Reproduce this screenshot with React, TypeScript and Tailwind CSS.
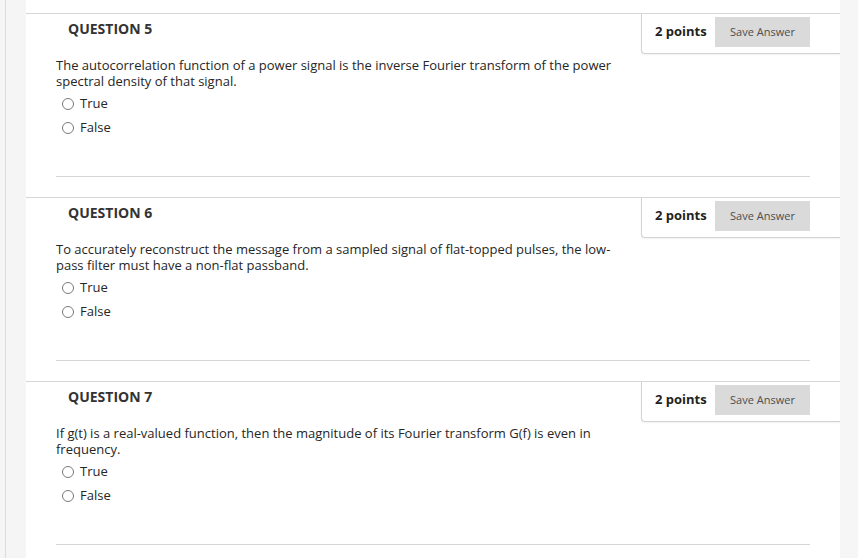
const questions = [
  {
    num: 5,
    text: "The autocorrelation function of a power signal is the inverse Fourier transform of the power spectral density of that signal.",
  },
  {
    num: 6,
    text: "To accurately reconstruct the message from a sampled signal of flat-topped pulses, the low-pass filter must have a non-flat passband.",
  },
  {
    num: 7,
    text: "If g(t) is a real-valued function, then the magnitude of its Fourier transform G(f) is even in frequency.",
  },
];

const Question = ({ num, text }: { num: number; text: string }) => {
  return (
    <section className="h-[184px] border-t border-[#d6d6d6]">
      <div className="flex h-[40px]">
        <h2 className="flex-1 pl-[42px] pt-[5px] text-[14px] leading-[20px] font-bold text-[#333]">
          QUESTION {num}
        </h2>
        <div className="w-[199px] h-[40px] border-l border-b border-[#d3d3d3] rounded-bl-[4px] shadow-[0_1px_2px_rgba(0,0,0,0.06)] pt-[3px]">
          <div className="flex items-center h-[30px] pl-[13px]">
            <span className="text-[13px] font-bold text-[#222]">2 points</span>
            <button className="ml-auto mr-[30px] w-[95px] h-[30px] bg-[#dadada] text-[11px] text-[#4d4d4d]">
              Save Answer
            </button>
          </div>
        </div>
      </div>

      <div className="px-[30px]">
        <p className="mt-[3px] w-[568px] text-[13px] leading-[16px] text-[#262626]">{text}</p>
        <div className="mt-[3px]">
          {["True", "False"].map((opt) => (
            <label key={opt} className="flex items-center h-[24px] text-[13px] text-[#262626]">
              <span className="ml-[6px] w-[12px] h-[12px] rounded-full border border-[#7a7a7a] bg-white" />
              <span className="ml-[6px]">{opt}</span>
            </label>
          ))}
        </div>
        <div className="mt-[36px] border-t border-[#d6d6d6]" />
      </div>
    </section>
  );
};

export default function App() {
  return (
    <div
      className="flex w-[858px] h-[558px] overflow-hidden bg-white"
      style={{ fontFamily: '"Open Sans", "Noto Sans", sans-serif' }}
    >
      <div className="w-[26px] shrink-0 bg-[#f5f5f5] pl-[5px]">
        <div className="h-full w-px bg-[#dcdcdc]" />
      </div>
      <main className="flex-1 pt-[13px] bg-white">
        {questions.map((q) => (
          <Question key={q.num} {...q} />
        ))}
      </main>
      <div className="w-[18px] shrink-0 bg-[#f6f6f6]" />
    </div>
  );
}
